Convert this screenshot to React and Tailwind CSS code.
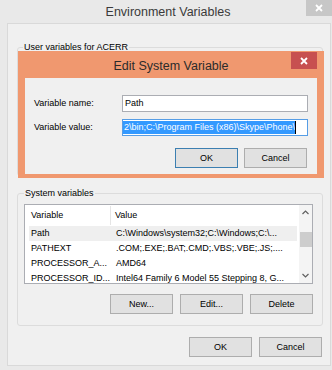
import clsx from 'clsx';

const rows = [
  { name: 'Path', value: 'C:\\Windows\\system32;C:\\Windows;C:\\...' },
  { name: 'PATHEXT', value: '.COM;.EXE;.BAT;.CMD;.VBS;.VBE;.JS;....' },
  { name: 'PROCESSOR_A...', value: 'AMD64' },
  { name: 'PROCESSOR_ID...', value: 'Intel64 Family 6 Model 55 Stepping 8, G...' },
];

const Btn = ({ label, primary }) => (
  <button
    className={clsx(
      'flex h-[20px] w-[63px] items-center justify-center border bg-[#e1e1e1] text-[9px] leading-none',
      primary ? 'border-[#3c7fb1]' : 'border-[#adadad]'
    )}
  >
    {label}
  </button>
);

const Close = ({ className }) => (
  <button className={clsx('flex items-center justify-center', className)}>
    <svg width="8" height="8" viewBox="0 0 8 8">
      <path d="M1 1L7 7M7 1L1 7" stroke="#fff" strokeWidth="1.8" />
    </svg>
  </button>
);

const Chevron = ({ down }) => (
  <svg width="7" height="5" viewBox="0 0 7 5">
    <path d={down ? 'M0.5 1L3.5 4L6.5 1' : 'M0.5 4L3.5 1L6.5 4'} stroke="#606060" strokeWidth="1.2" fill="none" />
  </svg>
);

const App = () => {
  return (
    <div className="relative h-[370px] w-[332px] overflow-hidden bg-[#e9e9e9] font-['Liberation_Sans',Arial,sans-serif] text-[9px] text-black">
      {/* title bar */}
      <div className="flex h-[23px] items-start">
        <div className="ml-[30px] flex-1 pt-[4px] text-center text-[12.5px] leading-[16px] text-[#3a3a3a]">
          Environment Variables
        </div>
        <Close className="h-[16px] w-[26px] bg-[#c7c7c7]" />
      </div>

      {/* client area */}
      <div className="ml-[7px] flex h-[343px] w-[324px] flex-col border border-[#d9d9d9] bg-[#f0f0f0]">
        <fieldset className="ml-[9px] mt-[17px] h-[135px] w-[306px] rounded-[3px] border border-[#dcdcdc] px-[5px]">
          <legend className="px-[1px] leading-[12px]">User variables for ACERR</legend>
        </fieldset>

        <fieldset className="ml-[9px] mt-[11px] h-[139px] w-[306px] rounded-[3px] border border-[#dcdcdc] px-[6px]">
          <legend className="px-[1px] leading-[12px]">System variables</legend>

          <div className="mt-[5px] flex h-[80px] w-[289px] border border-[#abadb3] bg-white">
            <div className="ml-[4px] w-[268px]">
              <div className="flex h-[21px] items-center">
                <div className="w-[82px] border-r border-[#e5e5e5] pl-[2px] leading-[19px]">Variable</div>
                <div className="pl-[4px]">Value</div>
              </div>
              {rows.map((row, i) => (
                <div
                  key={row.name}
                  className={clsx('flex h-[15px] items-center whitespace-nowrap', i === 0 && 'bg-[#efefef]')}
                >
                  <div className="w-[83px] pl-[2px]">{row.name}</div>
                  <div className="pl-[4px]">{row.value}</div>
                </div>
              ))}
            </div>
            <div className="ml-auto flex w-[13px] flex-col items-center bg-[#f4f4f4]">
              <div className="flex h-[15px] items-center">
                <Chevron />
              </div>
              <div className="mt-[12px] h-[15px] w-[12px] bg-[#cdcdcd]" />
              <div className="mt-auto flex h-[15px] items-center">
                <Chevron down />
              </div>
            </div>
          </div>

          <div className="mt-[10px] flex w-[289px] justify-end gap-[7px]">
            <Btn label="New..." />
            <Btn label="Edit..." />
            <Btn label="Delete" />
          </div>
        </fieldset>

        <div className="mt-[11px] flex justify-end gap-[7px] pr-[8px]">
          <Btn label="OK" />
          <Btn label="Cancel" />
        </div>
      </div>

      {/* edit dialog */}
      <div className="absolute left-[18px] top-[51px] flex h-[127px] w-[306px] flex-col bg-[#f0986f]">
        <div className="flex h-[27px] items-start">
          <div className="ml-[33px] flex-1 pt-[7px] text-center text-[12.5px] leading-[16px] text-[#2b2b2b]">
            Edit System Variable
          </div>
          <Close className="mr-[7px] mt-[1px] h-[17px] w-[26px] bg-[#c75050]" />
        </div>
        <div className="mx-[7px] h-[96px] bg-[#f0f0f0] pl-[9px] pt-[17px]">
          <div className="flex items-center">
            <span className="w-[88px]">Variable name:</span>
            <div className="h-[17px] w-[186px] border border-[#abadb3] bg-white pl-[2px] leading-[15px]">Path</div>
          </div>
          <div className="mt-[7px] flex items-center">
            <span className="w-[88px]">Variable value:</span>
            <div className="flex h-[17px] w-[186px] items-center overflow-hidden whitespace-nowrap border border-[#569de5] bg-white">
              <span className="bg-[#3399ff] pl-[1px] leading-[13px] text-white">2\bin;C:\Program Files (x86)\Skype\Phone\</span>
              <span className="h-[13px] w-[1px] bg-black" />
            </div>
          </div>
          <div className="ml-[141px] mt-[12px] flex gap-[6px]">
            <Btn label="OK" primary />
            <Btn label="Cancel" />
          </div>
        </div>
      </div>
    </div>
  );
};

export default App;
